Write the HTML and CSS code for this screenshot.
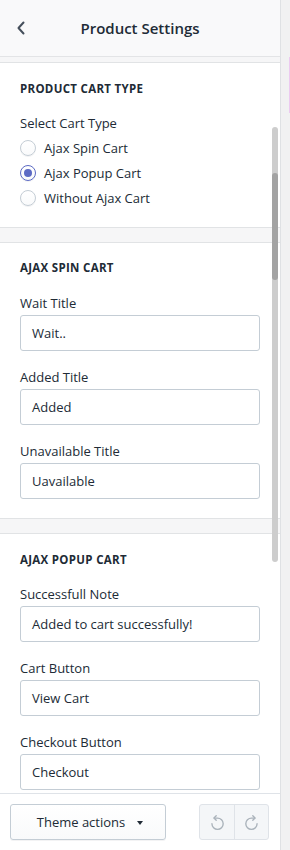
FILE: index.html
```html
<!DOCTYPE html>
<html>
<head>
<meta charset="utf-8">
<link rel="stylesheet" href="styles.css">
</head>
<body>
<div class="app">
  <div class="panel">
    <header class="head">
      <span class="back">
        <svg width="10" height="14" viewBox="0 0 10 14"><path d="M7.5 1.5 L2.5 7 L7.5 12.5" fill="none" stroke="#454f5b" stroke-width="2" stroke-linecap="round" stroke-linejoin="round"/></svg>
      </span>
      <h1 class="title">Product Settings</h1>
    </header>
    <div class="scroll">
      <div class="cards">
        <section class="card">
          <h2 class="sec">PRODUCT CART TYPE</h2>
          <div class="label">Select Cart Type</div>
          <div class="radios">
            <label class="radio"><span class="dot"></span>Ajax Spin Cart</label>
            <label class="radio"><span class="dot on"></span>Ajax Popup Cart</label>
            <label class="radio"><span class="dot"></span>Without Ajax Cart</label>
          </div>
        </section>
        <section class="card">
          <h2 class="sec">AJAX SPIN CART</h2>
          <div class="field"><div class="label">Wait Title</div><div class="input">Wait..</div></div>
          <div class="field"><div class="label">Added Title</div><div class="input">Added</div></div>
          <div class="field"><div class="label">Unavailable Title</div><div class="input">Uavailable</div></div>
        </section>
        <section class="card">
          <h2 class="sec">AJAX POPUP CART</h2>
          <div class="field"><div class="label">Successfull Note</div><div class="input">Added to cart successfully!</div></div>
          <div class="field"><div class="label">Cart Button</div><div class="input">View Cart</div></div>
          <div class="field"><div class="label">Checkout Button</div><div class="input">Checkout</div></div>
        </section>
      </div>
      <div class="sbar"><div class="sthumb"></div></div>
    </div>
    <footer class="foot">
      <button class="actions">Theme actions <span class="caret"></span></button>
      <div class="hist">
        <span class="hbtn">
          <svg width="18" height="18" viewBox="0 0 16 16"><path d="M5.5 4.5 H8.5 A5 5 0 1 1 3.5 9.5" fill="none" stroke="#a9b2ba" stroke-width="1.2" stroke-linecap="round"/><path d="M7.3 2.5 L5.3 4.5 L7.3 6.5" fill="none" stroke="#a9b2ba" stroke-width="1.2" stroke-linecap="round" stroke-linejoin="round"/></svg>
        </span>
        <span class="hbtn">
          <svg width="18" height="18" viewBox="0 0 16 16"><path d="M10.5 4.5 H7.5 A5 5 0 1 0 12.5 9.5" fill="none" stroke="#a9b2ba" stroke-width="1.2" stroke-linecap="round"/><path d="M8.7 2.5 L10.7 4.5 L8.7 6.5" fill="none" stroke="#a9b2ba" stroke-width="1.2" stroke-linecap="round" stroke-linejoin="round"/></svg>
        </span>
      </div>
    </footer>
  </div>
  <div class="strip"><div class="mark"></div></div>
</div>
</body>
</html>
```
FILE: styles.css
```css
* { box-sizing: border-box; }
html, body { margin: 0; padding: 0; }
body {
  font-family: "Open Sans", "Noto Sans", sans-serif;
  color: #212b36;
  font-size: 13px;
  background: #fff;
}
.app { display: flex; width: 290px; height: 850px; overflow: hidden; }
.panel { width: 280px; display: flex; flex-direction: column; height: 850px; }
.strip {
  width: 10px;
  background: #f1f1f2;
  border-left: 1px solid #dfe1e4;
  display: flex;
  justify-content: flex-end;
}
.mark { width: 1px; height: 56px; margin-top: 57px; background: #eccaf0; }
.head {
  height: 57px;
  flex: none;
  background: #f9f9fa;
  border-bottom: 1px solid #e3e4e6;
  display: flex;
  align-items: center;
  position: relative;
  padding-left: 16px;
}
.back { display: flex; width: 10px; height: 14px; }
.title {
  margin: 0;
  flex: 1;
  text-align: center;
  font-size: 15px;
  font-weight: 600;
  padding-right: 26px;
  color: #212b36;
}
.scroll {
  flex: 1;
  background: #f6f6f7;
  overflow: hidden;
  position: relative;
  padding-top: 5px;
}
.cards { display: flex; flex-direction: column; gap: 14px; }
.card {
  background: #fff;
  border-top: 1px solid #e1e3e5;
  border-bottom: 1px solid #e1e3e5;
  padding: 18px 20px 17px;
}
.sec {
  margin: 0 0 16px;
  font-size: 11.5px;
  line-height: 16px;
  font-weight: 700;
  letter-spacing: 0.3px;
  color: #212b36;
}
.label { line-height: 20px; font-size: 13px; color: #212b36; }
.radios { margin-top: 2px; display: flex; flex-direction: column; }
.radio { display: flex; align-items: center; gap: 8px; height: 25px; }
.dot {
  width: 16px; height: 16px;
  border-radius: 50%;
  border: 1px solid #c4cdd5;
  background: linear-gradient(#fff, #f9fafb);
  box-shadow: 0 1px 0 rgba(22,29,37,0.05);
  position: relative;
  flex: none;
}
.dot.on { border-color: #5c6ac4; }
.dot.on::after {
  content: "";
  position: absolute;
  left: 3px; top: 3px;
  width: 8px; height: 8px;
  border-radius: 50%;
  background: #5c6ac4;
}
.field + .field { margin-top: 16px; }
.input {
  margin-top: 2px;
  height: 36px;
  border: 1px solid #c4cdd5;
  border-radius: 3px;
  display: flex;
  align-items: center;
  padding: 0 11px;
  font-size: 13px;
  color: #212b36;
  background: #fff;
}
.card:nth-child(2) { padding-top: 17px; padding-bottom: 19px; }
.card:nth-child(2) .sec { margin-bottom: 17px; }
.sbar {
  position: absolute;
  left: 272px; top: 70px;
  width: 6px; height: 435px;
  background: #cdcdcd;
  border-radius: 3px;
}
.sthumb {
  margin-top: 46px;
  height: 107px;
  background: #a3a3a3;
  border-radius: 3px;
}
.foot {
  height: 57px;
  flex: none;
  border-top: 1px solid #dfe3e8;
  background: #fff;
  display: flex;
  align-items: flex-start;
  padding: 10px 11px 0 10px;
  justify-content: space-between;
}
.actions {
  width: 156px; height: 36px;
  border: 1px solid #c4cdd5;
  border-radius: 3px;
  background: linear-gradient(#fff, #f9fafb);
  box-shadow: 0 1px 0 rgba(22,29,37,0.05);
  font-family: "Open Sans", "Noto Sans", sans-serif;
  font-size: 13px;
  color: #212b36;
  display: flex;
  align-items: center;
  justify-content: center;
  gap: 12px;
  padding: 0 0 0 4px;
}
.caret {
  width: 0; height: 0;
  border-left: 3.5px solid transparent;
  border-right: 3.5px solid transparent;
  border-top: 4px solid #212b36;
  margin-top: 2px;
}
.hist {
  display: flex;
  height: 36px;
  border: 1px solid #dfe3e8;
  border-radius: 3px;
  background: #f4f6f8;
}
.hbtn {
  width: 34px;
  display: flex;
  align-items: center;
  justify-content: center;
}
.hbtn + .hbtn { border-left: 1px solid #dfe3e8; }
```
